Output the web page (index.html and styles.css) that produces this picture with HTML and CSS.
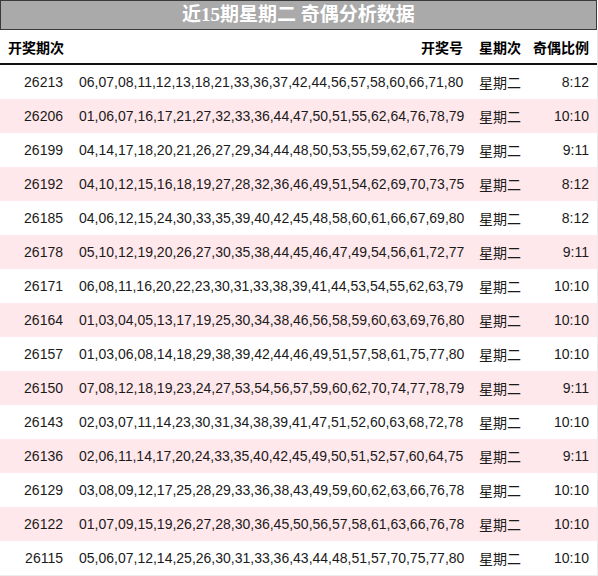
FILE: index.html
```html
<!DOCTYPE html>
<html lang="zh-CN">
<head>
<meta charset="utf-8">
<title>近15期星期二 奇偶分析数据</title>
<link rel="stylesheet" href="styles.css">
</head>
<body>
<div class="board">
  <div class="title">近15期星期二 奇偶分析数据</div>
  <table class="grid">
    <colgroup>
      <col class="c-issue"><col class="c-nums"><col class="c-day"><col class="c-ratio">
    </colgroup>
    <thead>
      <tr><th class="left">开奖期次</th><th class="right">开奖号</th><th class="left">星期次</th><th class="right">奇偶比例</th></tr>
    </thead>
    <tbody>
      <tr><td class="right">26213</td><td class="right">06,07,08,11,12,13,18,21,33,36,37,42,44,56,57,58,60,66,71,80</td><td class="left">星期二</td><td class="right">8:12</td></tr>
      <tr><td class="right">26206</td><td class="right">01,06,07,16,17,21,27,32,33,36,44,47,50,51,55,62,64,76,78,79</td><td class="left">星期二</td><td class="right">10:10</td></tr>
      <tr><td class="right">26199</td><td class="right">04,14,17,18,20,21,26,27,29,34,44,48,50,53,55,59,62,67,76,79</td><td class="left">星期二</td><td class="right">9:11</td></tr>
      <tr><td class="right">26192</td><td class="right">04,10,12,15,16,18,19,27,28,32,36,46,49,51,54,62,69,70,73,75</td><td class="left">星期二</td><td class="right">8:12</td></tr>
      <tr><td class="right">26185</td><td class="right">04,06,12,15,24,30,33,35,39,40,42,45,48,58,60,61,66,67,69,80</td><td class="left">星期二</td><td class="right">8:12</td></tr>
      <tr><td class="right">26178</td><td class="right">05,10,12,19,20,26,27,30,35,38,44,45,46,47,49,54,56,61,72,77</td><td class="left">星期二</td><td class="right">9:11</td></tr>
      <tr><td class="right">26171</td><td class="right">06,08,11,16,20,22,23,30,31,33,38,39,41,44,53,54,55,62,63,79</td><td class="left">星期二</td><td class="right">10:10</td></tr>
      <tr><td class="right">26164</td><td class="right">01,03,04,05,13,17,19,25,30,34,38,46,56,58,59,60,63,69,76,80</td><td class="left">星期二</td><td class="right">10:10</td></tr>
      <tr><td class="right">26157</td><td class="right">01,03,06,08,14,18,29,38,39,42,44,46,49,51,57,58,61,75,77,80</td><td class="left">星期二</td><td class="right">10:10</td></tr>
      <tr><td class="right">26150</td><td class="right">07,08,12,18,19,23,24,27,53,54,56,57,59,60,62,70,74,77,78,79</td><td class="left">星期二</td><td class="right">9:11</td></tr>
      <tr><td class="right">26143</td><td class="right">02,03,07,11,14,23,30,31,34,38,39,41,47,51,52,60,63,68,72,78</td><td class="left">星期二</td><td class="right">10:10</td></tr>
      <tr><td class="right">26136</td><td class="right">02,06,11,14,17,20,24,33,35,40,42,45,49,50,51,52,57,60,64,75</td><td class="left">星期二</td><td class="right">9:11</td></tr>
      <tr><td class="right">26129</td><td class="right">03,08,09,12,17,25,28,29,33,36,38,43,49,59,60,62,63,66,76,78</td><td class="left">星期二</td><td class="right">10:10</td></tr>
      <tr><td class="right">26122</td><td class="right">01,07,09,15,19,26,27,28,30,36,45,50,56,57,58,61,63,66,76,78</td><td class="left">星期二</td><td class="right">10:10</td></tr>
      <tr><td class="right">26115</td><td class="right">05,06,07,12,14,25,26,30,31,33,36,43,44,48,51,57,70,75,77,80</td><td class="left">星期二</td><td class="right">10:10</td></tr>
    </tbody>
  </table>
</div>
</body>
</html>
```
FILE: styles.css
```css
html, body {
  margin: 0;
  padding: 0;
  background: #ffffff;
}

.board {
  width: 598px;
  font-family: "Liberation Sans", "Noto Sans CJK SC", sans-serif;
  color: #1a1a1a;
}

.title {
  box-sizing: border-box;
  width: 597px;
  height: 30px;
  border: 1px solid #3a3a3a;
  background: #aaaaaa;
  color: #ffffff;
  font-family: "Liberation Serif", "Noto Sans CJK SC", serif;
  font-weight: bold;
  font-size: 19px;
  line-height: 28px;
  text-align: center;
}

.grid {
  width: 598px;
  table-layout: fixed;
  border-collapse: separate;
  border-spacing: 0;
  font-size: 14px;
  border-right: 1px solid #ececec;
  border-bottom: 1px solid #ececec;
}

.c-issue { width: 71px; }
.c-nums { width: 400px; }
.c-day { width: 58px; }
.c-ratio { width: 68px; }

.grid th {
  height: 33px;
  padding: 0 8px;
  font-weight: bold;
  color: #000000;
  border-bottom: 2px solid #111111;
  vertical-align: middle;
  white-space: nowrap;
}

.grid td {
  height: 34px;
  padding: 0 8px;
  vertical-align: middle;
  white-space: nowrap;
}

.grid th:last-child,
.grid td:last-child {
  padding-left: 0;
}

.grid tbody tr:nth-child(even) td {
  background: #ffe8eb;
}

.left { text-align: left; }
.right { text-align: right; }
```
